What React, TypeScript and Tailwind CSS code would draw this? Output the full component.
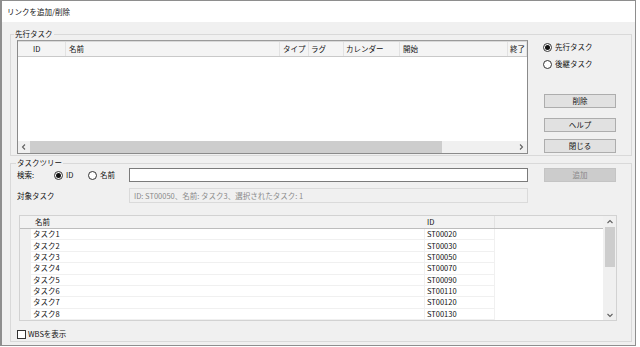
import type { ReactNode } from "react";

const tasks = [
  ["タスク1", "ST00020"],
  ["タスク2", "ST00030"],
  ["タスク3", "ST00050"],
  ["タスク4", "ST00070"],
  ["タスク5", "ST00090"],
  ["タスク6", "ST00110"],
  ["タスク7", "ST00120"],
  ["タスク8", "ST00130"],
];

const predCols = [
  { label: "ID", cls: "w-[48px] pl-[15px]" },
  { label: "名前", cls: "w-[214px] pl-[3px]" },
  { label: "タイプ", cls: "w-[29px] pl-[3px]" },
  { label: "ラグ", cls: "w-[35px] pl-[2px]" },
  { label: "カレンダー", cls: "w-[56px] pl-[2px]" },
  { label: "開始", cls: "w-[108px] pl-[3px]" },
  { label: "終了", cls: "flex-1 pl-[2px]" },
];

function Radio({ checked, label }: { checked?: boolean; label: string }) {
  return (
    <span className="flex items-center gap-[3px]">
      <span className="flex h-[9px] w-[9px] items-center justify-center rounded-full border border-[#333] bg-white">
        {checked ? <span className="h-[5px] w-[5px] rounded-full bg-[#111]" /> : null}
      </span>
      <span>{label}</span>
    </span>
  );
}

function Btn({ children, disabled }: { children: ReactNode; disabled?: boolean }) {
  return (
    <button
      type="button"
      className={
        disabled
          ? "flex h-[14px] w-[72px] items-center justify-center border border-[#c4c4c4] bg-[#cccccc] text-[#8a8a8a]"
          : "flex h-[14px] w-[72px] items-center justify-center border border-[#adadad] bg-[#e1e1e1] text-[#111]"
      }
    >
      {children}
    </button>
  );
}

function Chevron({ dir }: { dir: "left" | "right" | "up" | "down" }) {
  const pts = {
    left: "5,1.5 2.5,4 5,6.5",
    right: "3,1.5 5.5,4 3,6.5",
    up: "1.5,5 4,2.5 6.5,5",
    down: "1.5,3 4,5.5 6.5,3",
  }[dir];
  return (
    <svg width="8" height="8" viewBox="0 0 8 8" className="shrink-0">
      <polyline points={pts} fill="none" stroke="#606060" strokeWidth="1.1" />
    </svg>
  );
}

export default function App() {
  return (
    <div className="h-[347px] w-[640px] bg-white font-['Noto_Sans_CJK_JP','Noto_Sans',sans-serif] text-[7.5px] leading-[10px] text-[#111]">
      <div className="flex h-[346px] w-[636px] flex-col border-b border-l-2 border-r border-t border-[#8e8e8e]">
        <div className="flex h-[21px] items-center bg-white pl-[5px] text-[7.5px]">リンクを追加/削除</div>

        <div className="flex flex-1 flex-col bg-[#f0f0f0] pl-[8px] pt-[7px]">
          <fieldset className="h-[127px] w-[622px] border border-[#d9d9d9] pl-[6px] pt-[1px]">
            <legend className="-ml-[3px] px-[1px] leading-[10px]">先行タスク</legend>
            <div className="flex">
              <div className="flex h-[114px] w-[511px] flex-col border border-[#8a8a8a] border-t-[#9a9a9a] bg-white">
                <div className="flex h-[16px] border-b border-t border-b-[#c9c9c9] border-t-[#d8d8d8] bg-[#f4f4f4]">
                  {predCols.map((c) => (
                    <div
                      key={c.label}
                      className={`flex items-center overflow-hidden whitespace-nowrap border-r border-[#e2e2e2] ${c.cls}`}
                    >
                      {c.label}
                    </div>
                  ))}
                </div>
                <div className="flex-1" />
                <div className="flex h-[12px] items-center bg-[#f0f0f0]">
                  <div className="flex w-[12px] items-center justify-center">
                    <Chevron dir="left" />
                  </div>
                  <div className="h-full w-[412px] bg-[#cdcdcd]" />
                  <div className="flex-1" />
                  <div className="flex w-[13px] items-center justify-center">
                    <Chevron dir="right" />
                  </div>
                </div>
              </div>

              <div className="ml-[15px] flex flex-col pt-[2px]">
                <Radio checked label="先行タスク" />
                <div className="mt-[7px]">
                  <Radio label="後継タスク" />
                </div>
                <div className="ml-[1px] mt-[25px] flex flex-col">
                  <Btn>削除</Btn>
                  <div className="mt-[10px]">
                    <Btn>ヘルプ</Btn>
                  </div>
                  <div className="mt-[7px]">
                    <Btn>閉じる</Btn>
                  </div>
                </div>
              </div>
            </div>
          </fieldset>

          <fieldset className="mt-[2px] h-[184px] w-[622px] border border-[#d9d9d9] pl-[6px]">
            <legend className="-ml-[1px] px-[1px] leading-[10px]">タスクツリー</legend>
            <div className="flex h-[14px] items-center">
              <span className="w-[37px]">検索:</span>
              <span className="w-[34px]">
                <Radio checked label="ID" />
              </span>
              <span className="w-[41px]">
                <Radio label="名前" />
              </span>
              <div className="h-[14px] w-[399px] border border-[#7a7a7a] bg-white" />
              <div className="ml-[16px]">
                <Btn disabled>追加</Btn>
              </div>
            </div>

            <div className="mt-[6px] flex h-[15px] items-center">
              <span className="w-[112px]">対象タスク</span>
              <div className="flex h-[15px] w-[399px] items-center border border-[#dadada] bg-[#f0f0f0] pl-[4px] text-[#8a8a8a]">
                ID: ST00050、名前: タスク3、選択されたタスク: 1
              </div>
            </div>

            <div className="ml-[2px] mt-[12px] flex h-[106px] w-[598px] border border-[#d2d2d2] bg-white">
              <div className="flex flex-1 flex-col">
                <div className="flex h-[13px] border-b border-[#bdbdbd] bg-[#f2f2f2]">
                  <div className="flex w-[404px] items-center pl-[15px]">名前</div>
                  <div className="flex w-[71px] items-center border-r border-[#e2e2e2] pl-[3px]">ID</div>
                </div>
                {tasks.map(([name, id]) => (
                  <div key={id} className="flex h-[11.375px]">
                    <div className="w-[11px] bg-[#f0f0f0]" />
                    <div className="flex w-[393px] items-center border-b border-[#f0f0f0] pl-[2px]">{name}</div>
                    <div className="flex w-[71px] items-center border-b border-l border-r border-[#f0f0f0] pl-[2px]">
                      {id}
                    </div>
                  </div>
                ))}
              </div>
              <div className="flex w-[13px] flex-col items-center bg-[#f0f0f0]">
                <div className="flex h-[11px] items-center justify-center">
                  <Chevron dir="up" />
                </div>
                <div className="h-[40px] w-[10px] bg-[#cdcdcd]" />
                <div className="flex-1" />
                <div className="flex h-[11px] items-center justify-center">
                  <Chevron dir="down" />
                </div>
              </div>
            </div>

            <label className="mt-[8px] flex items-center gap-[2px]">
              <span className="h-[9px] w-[9px] border border-[#333] bg-white" />
              <span>WBSを表示</span>
            </label>
          </fieldset>
        </div>
      </div>
    </div>
  );
}
